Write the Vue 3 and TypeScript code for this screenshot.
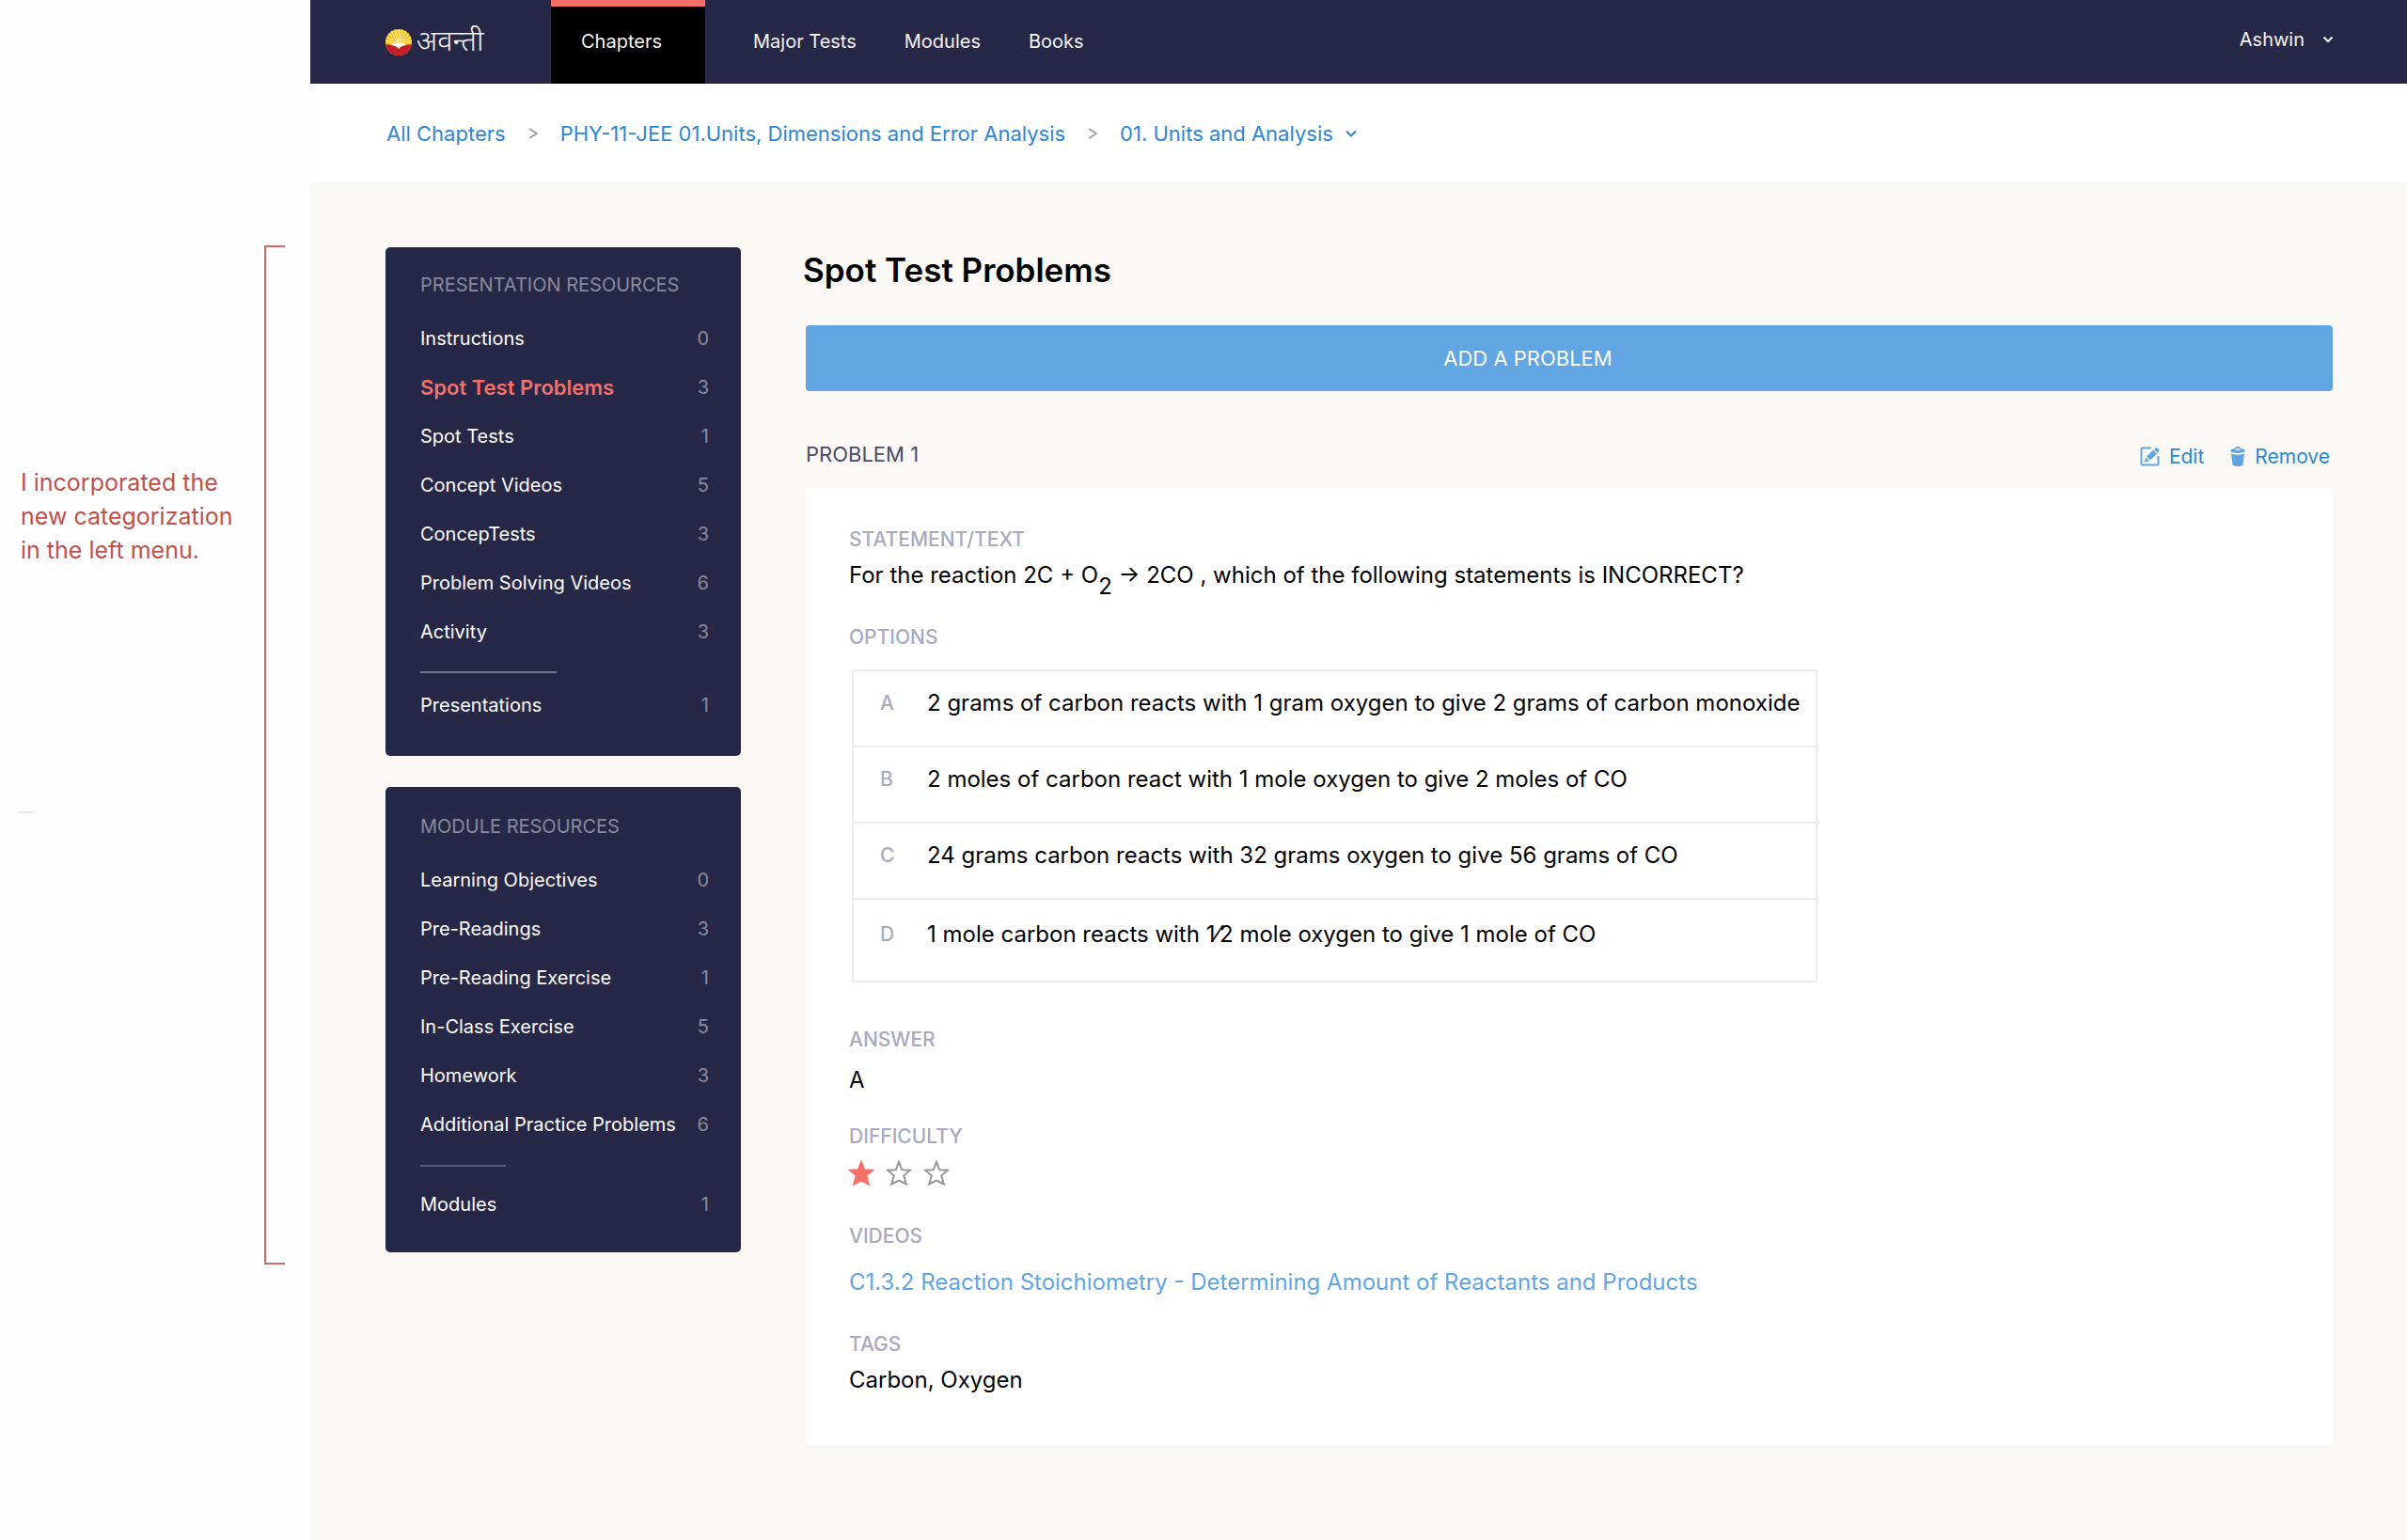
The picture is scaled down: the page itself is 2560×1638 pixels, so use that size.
<script setup lang="ts">
interface Resource {
  label: string
  count: number
  active?: boolean
}

interface ResourceGroup {
  title: string
  kind: string
  items: Resource[]
  summary: Resource
}

const navLinks = ['Major Tests', 'Modules', 'Books']

const groups: ResourceGroup[] = [
  {
    title: 'PRESENTATION RESOURCES',
    kind: 'presentation',
    items: [
      { label: 'Instructions', count: 0 },
      { label: 'Spot Test Problems', count: 3, active: true },
      { label: 'Spot Tests', count: 1 },
      { label: 'Concept Videos', count: 5 },
      { label: 'ConcepTests', count: 3 },
      { label: 'Problem Solving Videos', count: 6 },
      { label: 'Activity', count: 3 },
    ],
    summary: { label: 'Presentations', count: 1 },
  },
  {
    title: 'MODULE RESOURCES',
    kind: 'module',
    items: [
      { label: 'Learning Objectives', count: 0 },
      { label: 'Pre-Readings', count: 3 },
      { label: 'Pre-Reading Exercise', count: 1 },
      { label: 'In-Class Exercise', count: 5 },
      { label: 'Homework', count: 3 },
      { label: 'Additional Practice Problems', count: 6 },
    ],
    summary: { label: 'Modules', count: 1 },
  },
]

const options = [
  { key: 'A', text: '2 grams of carbon reacts with 1 gram oxygen to give 2 grams of carbon monoxide' },
  { key: 'B', text: '2 moles of carbon react with 1 mole oxygen to give 2 moles of CO' },
  { key: 'C', text: '24 grams carbon reacts with 32 grams oxygen to give 56 grams of CO' },
  { key: 'D', text: '1 mole carbon reacts with 1⁄2 mole oxygen to give 1 mole of CO' },
]

const difficulty = 1
const rays = Array.from({ length: 13 }, (_, i) => {
  const angle = (Math.PI * (i + 0.5)) / 13
  return { x: 14 - 18 * Math.cos(angle), y: 18 - 20 * Math.sin(angle) }
})
</script>

<template>
  <div class="board">
    <aside class="notes">
      <p class="note">I incorporated the<br />new categorization<br />in the left menu.</p>
      <span class="dash"></span>
      <span class="bracket"></span>
    </aside>

    <div class="app">
      <header class="topbar">
        <a class="logo" href="#" aria-label="अवन्ती">
          <svg class="emblem" viewBox="0 0 28 28" aria-hidden="true">
            <defs>
              <clipPath id="sun"><circle cx="14" cy="14" r="14" /></clipPath>
            </defs>
            <g clip-path="url(#sun)">
              <rect width="28" height="28" fill="#fbc21d" />
              <line v-for="(ray, i) in rays" :key="i" x1="14" y1="18" :x2="ray.x" :y2="ray.y" stroke="#fff3c0" stroke-width="1" />
              <path d="M0 16 Q8 16 14 20 Q20 16 28 16 V28 H0 Z" fill="#c22026" />
              <path d="M5 17 Q10 14.500 14 16 Q18 14.500 23 17 Q17 17 14 21 Q11 17 5 17 Z" fill="#fff" />
            </g>
          </svg>
          <span class="wordmark">अवन्ती</span>
        </a>
        <nav class="nav">
          <a class="tab" href="#">Chapters</a>
          <a v-for="link in navLinks" :key="link" class="link" href="#">{{ link }}</a>
        </nav>
        <button class="user" type="button">
          Ashwin
          <svg class="chevron" viewBox="0 0 12 8" aria-hidden="true"><path d="M1.500 1.500 L6 6 L10.500 1.500" /></svg>
        </button>
      </header>

      <nav class="crumbs" aria-label="Breadcrumb">
        <a href="#">All Chapters</a>
        <svg class="sep" viewBox="0 0 10 14" aria-hidden="true"><path d="M1 2 L9 7 L1 12" /></svg>
        <a href="#">PHY-11-JEE 01.Units, Dimensions and Error Analysis</a>
        <svg class="sep" viewBox="0 0 10 14" aria-hidden="true"><path d="M1 2 L9 7 L1 12" /></svg>
        <button type="button">
          01. Units and Analysis
          <svg class="chevron" viewBox="0 0 12 8" aria-hidden="true"><path d="M1 1.500 L6 6.500 L11 1.500" /></svg>
        </button>
      </nav>

      <div class="content">
        <div class="sidebar">
          <nav v-for="group in groups" :key="group.kind" class="menu" :class="group.kind">
            <h2>{{ group.title }}</h2>
            <ul>
              <li v-for="item in group.items" :key="item.label">
                <a href="#" :class="{ active: item.active }">{{ item.label }}</a>
                <span class="count">{{ item.count }}</span>
              </li>
            </ul>
            <hr />
            <div class="summary">
              <a href="#">{{ group.summary.label }}</a>
              <span class="count">{{ group.summary.count }}</span>
            </div>
          </nav>
        </div>

        <main class="main">
          <h1>Spot Test Problems</h1>
          <button class="add" type="button">ADD A PROBLEM</button>

          <div class="problem-head">
            <h2>PROBLEM 1</h2>
            <div class="actions">
              <button type="button">
                <svg class="edit-icon" viewBox="0 0 21 21" aria-hidden="true">
                  <path d="M12 1.500 H2.500 Q1.500 1.500 1.500 2.500 V18.500 Q1.500 19.500 2.500 19.500 H18.500 Q19.500 19.500 19.500 18.500 V10" fill="none" stroke="currentColor" stroke-width="2" />
                  <path d="M7 10.500 L14 3.500 L18 7.500 L11 14.500 Z M6 11.500 L10 15.500 L5 16.500 Z M15 3 L16.500 1.500 Q17.500 0.500 18.500 1.500 L20 3 Q21 4 20 5 L18.500 6.500 Z" fill="currentColor" />
                </svg>
                Edit
              </button>
              <button type="button">
                <svg class="trash-icon" viewBox="0 0 16 21" aria-hidden="true">
                  <path d="M0 5 Q0.500 2.500 4.500 2 Q5.500 0 8 0 Q10.500 0 11.500 2 Q15.500 2.500 16 5 Q13 7 8 7 Q3 7 0 5 Z" fill="currentColor" />
                  <path d="M5 4 Q5.500 2 8 2 Q10.500 2 11 4 L8 3.500 Z" fill="#f9f8f4" />
                  <path d="M1 7.500 Q8 10 15 7.500 L13.500 19 Q12.500 21 8 21 Q3.500 21 2.500 19 Z" fill="currentColor" />
                </svg>
                Remove
              </button>
            </div>
          </div>

          <article class="card">
            <section>
              <h3>STATEMENT/TEXT</h3>
              <p>For the reaction 2C + O<sub>2</sub> → 2CO , which of the following statements is INCORRECT?</p>
            </section>
            <section>
              <h3>OPTIONS</h3>
              <ol class="options">
                <li v-for="option in options" :key="option.key">
                  <span class="key">{{ option.key }}</span>
                  <span>{{ option.text }}</span>
                </li>
              </ol>
            </section>
            <section class="answer">
              <h3>ANSWER</h3>
              <p>A</p>
            </section>
            <section class="difficulty">
              <h3>DIFFICULTY</h3>
              <div class="stars" role="img" :aria-label="`${difficulty} of 3`">
                <svg v-for="n in 3" :key="n" viewBox="0 0 28 27" :class="{ filled: n <= difficulty }">
                  <path d="M14 2 L17.200 10.200 L26 10.700 L19.200 16.300 L21.800 25.500 L14 21.500 L6.200 25.500 L8.800 16.300 L2 10.700 L10.800 10.200 Z" />
                </svg>
              </div>
            </section>
            <section class="videos">
              <h3>VIDEOS</h3>
              <p><a href="#">C1.3.2 Reaction Stoichiometry - Determining Amount of Reactants and Products</a></p>
            </section>
            <section>
              <h3>TAGS</h3>
              <p>Carbon, Oxygen</p>
            </section>
          </article>
        </main>
      </div>
    </div>
  </div>
</template>

<style>
body {
  margin: 0;
  background: #fefefe;
}
</style>

<style scoped>
.board {
  display: flex;
  min-height: 100vh;
  font-family: Inter, "Noto Sans", sans-serif;
  font-size: 20px;
  color: #000;
}
h1, h2, h3, p, ul, ol {
  margin: 0;
  padding: 0;
  font-weight: 400;
  list-style: none;
}
a {
  color: inherit;
  text-decoration: none;
}
button {
  margin: 0;
  padding: 0;
  border: 0;
  background: none;
  color: inherit;
  font: inherit;
  cursor: pointer;
}
.chevron {
  width: 12px;
  height: 8px;
  fill: none;
  stroke: currentColor;
  stroke-width: 2;
}

/* Reviewer's margin notes */
.notes {
  position: relative;
  flex: none;
  width: 330px;
}
.note {
  padding: 495px 0 0 22px;
  font-size: 25px;
  line-height: 36px;
  color: #bf5149;
  white-space: nowrap;
}
.dash {
  position: absolute;
  top: 863px;
  left: 19px;
  width: 18px;
  height: 2px;
  background: #e8e8e8;
}
.bracket {
  position: absolute;
  top: 261px;
  left: 281px;
  width: 20px;
  height: 1080px;
  border: 2px solid #cb6c67;
  border-right: 0;
}

.app {
  flex: 1;
  min-width: 0;
  background: #f9f8f4;
}

.topbar {
  display: flex;
  height: 89px;
  padding: 0 78px 0 80px;
  background: #272748;
  color: #f4f4f4;
}
.logo {
  display: flex;
  align-items: center;
  width: 176px;
  gap: 5px;
}
.emblem {
  width: 28px;
  height: 28px;
}
.wordmark {
  padding-top: 4px;
  font-family: "Noto Sans Devanagari", "Noto Sans", sans-serif;
  font-size: 31px;
  font-weight: 300;
  line-height: 40px;
}
.nav {
  display: flex;
  flex: 1;
  line-height: 88px;
}
.tab {
  box-sizing: border-box;
  width: 164px;
  height: 89px;
  padding-left: 32px;
  border-top: 7px solid #f6706a;
  background: #000;
  line-height: 74px;
}
.link {
  margin-left: 51px;
}
.user {
  display: flex;
  align-items: center;
  gap: 19px;
  height: 84px;
}

.crumbs {
  display: flex;
  box-sizing: border-box;
  align-items: center;
  gap: 24px;
  height: 104px;
  padding: 2px 0 0 81px;
  background: #fff;
  color: #2f86d2;
  font-size: 22px;
}
.crumbs button {
  display: flex;
  align-items: center;
  gap: 13px;
}
.sep {
  width: 10px;
  height: 14px;
  fill: none;
  stroke: #a0a0a0;
  stroke-width: 2;
}

.content {
  display: flex;
  gap: 69px;
  padding: 70px 79px 99px 80px;
}
.sidebar {
  flex: none;
  width: 378px;
}
.menu {
  box-sizing: border-box;
  margin-bottom: 33px;
  padding: 27px 34px 0 37px;
  border-radius: 5px;
  background: #272748;
  color: #fff;
}
.presentation {
  height: 541px;
}
.module {
  height: 495px;
  padding-top: 29px;
}
.menu h2 {
  margin-bottom: 18px;
  font-size: 20px;
  line-height: 26px;
  color: #8a8a9c;
}
.menu li,
.summary {
  display: flex;
  justify-content: space-between;
  line-height: 52px;
}
.count {
  color: #8a8a9c;
}
.active {
  font-size: 22px;
  font-weight: 600;
  color: #f6706a;
}
.menu hr {
  width: 145px;
  height: 2px;
  margin: 16px 0 8px;
  border: 0;
  background: #74748a;
}
.module hr {
  width: 91px;
  margin: 17px 0 14px;
  background: #5c5c76;
}

.main {
  flex: 1;
  min-width: 0;
}
h1 {
  padding-top: 2px;
  margin-left: -3px;
  font-size: 35px;
  font-weight: 600;
  line-height: 44px;
}
.add {
  display: block;
  width: 100%;
  height: 70px;
  margin-top: 37px;
  padding-right: 88px;
  border-radius: 4px;
  background: #61a5e2;
  color: #fff;
  font-size: 22px;
}
.problem-head {
  display: flex;
  justify-content: space-between;
  height: 104px;
}
.problem-head h2 {
  padding-top: 54px;
  font-size: 22px;
  line-height: 26px;
  color: #4a4a69;
}
.actions {
  display: flex;
  gap: 28px;
  padding: 56px 3px 0 0;
  color: #2f86d2;
  font-size: 21px;
}
.actions button {
  display: flex;
  align-items: center;
  gap: 10px;
  height: 26px;
}
.actions svg {
  height: 21px;
  color: #61a5e2;
}
.edit-icon {
  width: 21px;
}
.trash-icon {
  width: 16px;
}

.card {
  padding: 41px 46px 54px;
  border-radius: 4px;
  background: #fff;
}
.card section {
  margin-top: 38px;
}
.card section:first-child {
  margin-top: 0;
}
.card h3 {
  font-size: 21px;
  font-weight: 500;
  line-height: 26px;
  color: #a9a9c0;
}
.card p {
  margin-top: 10px;
  font-size: 24px;
  line-height: 30px;
}
.card sub {
  font-size: 24px;
  line-height: 0;
  vertical-align: -12px;
}
.options {
  box-sizing: border-box;
  width: 1027px;
  margin: 21px 0 0 3px;
  border: 2px solid #ececea;
  font-size: 24px;
  font-feature-settings: "frac" 0, "numr" 0, "dnom" 0;
}
.options li {
  display: flex;
  box-sizing: border-box;
  height: 81px;
  margin-right: -4px;
  border-bottom: 2px solid #ececea;
  line-height: 68px;
}
.options li:last-child {
  height: 86px;
  border: 0;
  line-height: 74px;
}
.key {
  width: 50px;
  padding-left: 28px;
  font-size: 21px;
  font-weight: 500;
  color: #a9a9c0;
}
.card .answer {
  margin-top: 48px;
}
.answer p {
  margin-top: 15px;
}
.card .difficulty {
  margin-top: 32px;
}
.stars {
  display: flex;
  gap: 12px;
  margin: 12px 0 0 -1px;
}
.stars svg {
  width: 28px;
  height: 27px;
  fill: none;
  stroke: #979797;
  stroke-width: 2;
}
.stars .filled {
  fill: #f6706a;
  stroke: #f6706a;
}
.card .videos {
  margin-top: 41px;
}
.videos p {
  margin-top: 21px;
  color: #61a5e2;
}
</style>
